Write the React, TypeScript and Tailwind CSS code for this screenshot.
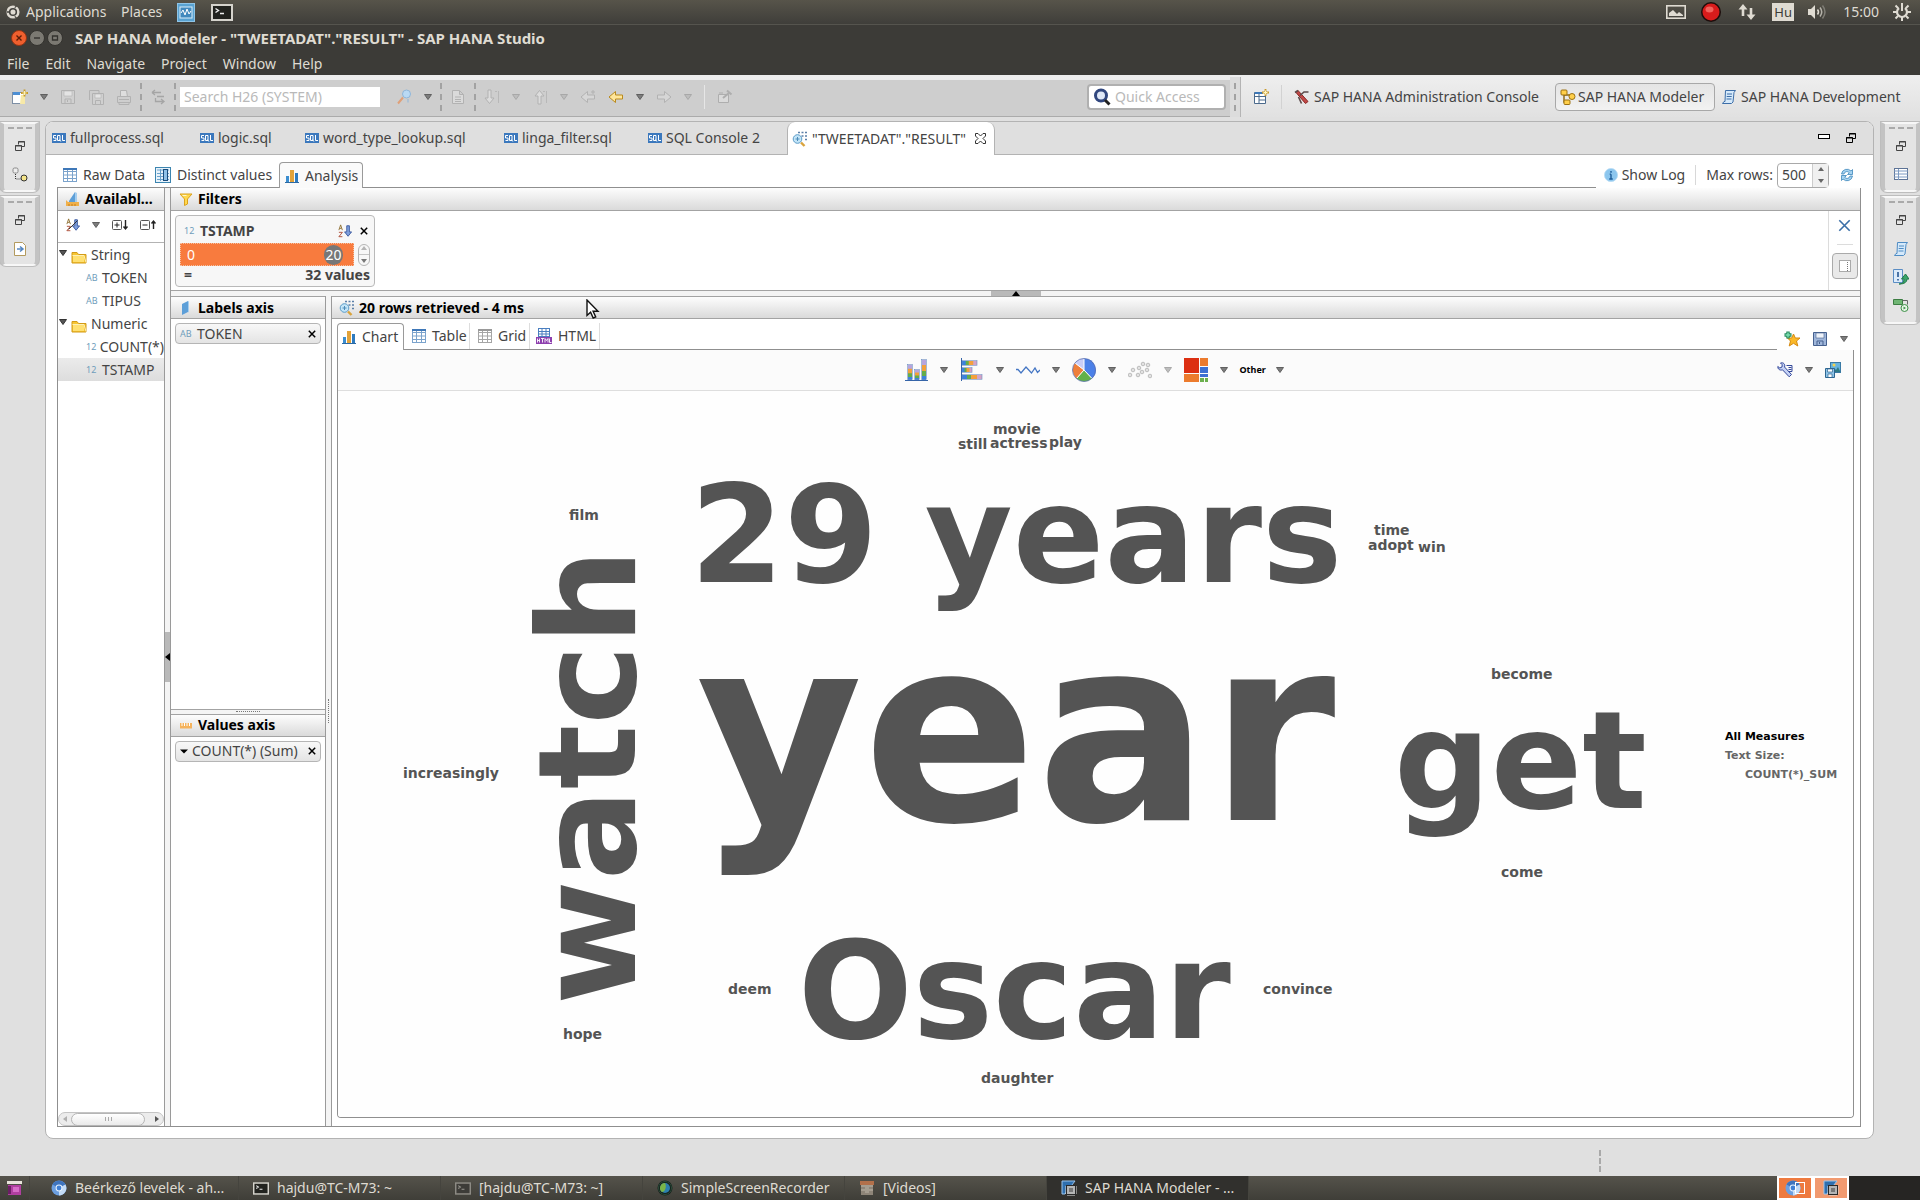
import React from "react";

type IconProps = { size?: number; w?: number; h?: number; box?: string; className?: string; children: React.ReactNode };

const Icon: React.FC<IconProps> = ({ size = 16, w, h, box = "0 0 16 16", className = "", children }) => (
  <svg width={w ?? size} height={h ?? size} viewBox={box} fill="none" aria-hidden="true" className={`shrink-0 ${className}`}>
    {children}
  </svg>
);

const IconButton: React.FC<{ label: string; className?: string; children: React.ReactNode }> = ({ label, className = "", children }) => (
  <button type="button" aria-label={label} className={`flex shrink-0 items-center justify-center ${className}`}>
    {children}
  </button>
);

const Arrow: React.FC<{ label?: string; faded?: boolean }> = ({ label = "Open menu", faded }) => (
  <IconButton label={label}>
    <Icon w={8} h={6} box="0 0 8 6">
      <path d="M.5 .5h7L4 5.5z" fill={faded ? "#bdbdbd" : "#7d7d7d"} stroke={faded ? "#a8a8a8" : "#606060"} />
    </Icon>
  </IconButton>
);

const DashedSep = () => <span className="h-7 w-0.5 shrink-0 border-l-2 border-dashed border-[#a2a2a2]" />;

/* ---------- icons ---------- */

const SqlIcon = () => (
  <Icon w={14} h={10} box="0 0 14 10">
    <rect width="14" height="10" fill="#3b78bd" />
    <path d="M4 2.500H1.500V5H4v2.500H1.500M5.500 2.500h2.500v5H5.500zM7.500 6.500l1.300 2M10.500 2v5.500H13" stroke="#fff" />
  </Icon>
);

const BarsIcon: React.FC<{ size?: number }> = ({ size = 14 }) => (
  <Icon size={size} box="0 0 14 14">
    <rect x="1" y="7" width="3" height="6" fill="#3c8ed0" />
    <rect x="5" y="1" width="4" height="12" fill="#e3a33a" />
    <rect x="10" y="4" width="3" height="9" fill="#2f7bbf" />
    <path d="M0 13.500h14" stroke="#2c6aa3" />
  </Icon>
);

const TableIcon: React.FC<{ color?: string; head?: string }> = ({ color = "#7ba3cc", head = "#3f78b8" }) => (
  <Icon size={14} box="0 0 14 14">
    <rect x=".5" y=".5" width="13" height="13" fill="#fff" stroke={color} />
    <path d="M0 3.500h14M0 7h14M0 10.500h14M4.500 0v14M9.500 0v14" stroke={color} />
    <path d="M0 1h14" stroke={head} strokeWidth="2" />
  </Icon>
);

const DistinctIcon = () => (
  <Icon>
    <rect x=".5" y=".5" width="15" height="15" fill="#e8f3fb" stroke="#3c85b0" />
    <path d="M2 3h12M2 6.500h12M2 9.500h12M2 12.500h12M5.500 2v12" stroke="#6ca3cc" />
    <rect x="8.500" y="2.500" width="4" height="11" fill="#8fc1e8" stroke="#1a4c7c" />
  </Icon>
);

const HtmlIcon = () => (
  <Icon>
    <rect x="2.500" y=".5" width="11" height="8" fill="#fff" stroke="#4a7fc0" />
    <path d="M2 3.500h12M2 6h12M6 0v9M10 0v9" stroke="#4a7fc0" />
    <rect y="9" width="16" height="7" fill="#8d3fae" />
    <path d="M1.500 10.500v4M3.500 10.500v4M1.500 12.500h2M5 10.500h3M6.500 10.500v4M9 14.500v-4l1.500 2 1.500-2v4M13.500 10.500v4H15.500" stroke="#fff" strokeWidth=".9" />
  </Icon>
);

const LensTableIcon = () => (
  <Icon>
    <path d="M6 1.500h2M9.500 1.500h2M13 1.500h2M9.500 5h2M13 5h2M13 8.500h2" stroke="#5b7fa8" strokeWidth="1.600" />
    <circle cx="5.500" cy="8" r="4.300" fill="#c3e5f8" stroke="#5b9cc8" />
    <path d="M3.500 8h4M5.500 6v4" stroke="#4d8bb8" />
    <path d="M9 11.500l3.500 3.500" stroke="#d9a33c" strokeWidth="2.400" />
  </Icon>
);

const AxisIcon: React.FC<{ base?: boolean }> = ({ base }) => (
  <Icon>
    <path d={base ? "M4 10L10 1v10H4z" : "M4 4l6-3v11l-6 3z"} fill="#5d9fd8" />
    <path d={base ? "M10 1l2 1v9h-2z" : "M10 1l1 .5v10.500l-1 .5z"} fill="#a5cdee" />
    {base && <path d="M1 15V9l2 2h11v4z" fill="#f0b04a" />}
    {base && <path d="M4 15v-2M7 15v-2M10 15v-2" stroke="#c47d1c" />}
  </Icon>
);

const RulerIcon = () => (
  <Icon>
    <path d="M2 11.500V6h12v5.500z" fill="#f5b35c" />
    <path d="M4 6v3M6.500 6v3M9 6v3M11.500 6v3" stroke="#fff" />
  </Icon>
);

const FunnelIcon = () => (
  <Icon>
    <path d="M2 3h12l-4.500 5v5l-3 1.500V8z" fill="#ffd84e" stroke="#dba21d" />
    <path d="M4.500 4.500h4" stroke="#fff6c9" />
  </Icon>
);

const SortIcon: React.FC<{ off?: boolean }> = ({ off }) => (
  <Icon size={14}>
    <path d="M1 7l2-6 2 6M2 5h2" stroke="#8a6a2a" />
    <path d="M1 9.500h4L1 14.500h4" stroke="#a8432c" />
    <path d="M10 2h3v7h2.500l-4 5-4-5H10z" fill="#7f9fdc" stroke="#34549c" />
    {off && <path d="M3 13L13 3" stroke="#222" />}
  </Icon>
);

const TreeToggleIcon: React.FC<{ plus?: boolean }> = ({ plus }) => (
  <Icon>
    <rect x=".5" y="3.500" width="9" height="9" rx="1" stroke="#555" />
    <path d={plus ? "M2.500 8h5M5 5.500v5" : "M2.500 8h5"} stroke="#222" />
    <path d={plus ? "M13.500 3v8M11.500 9.500l2 2.500 2-2.500" : "M13.500 12V4.500M11.500 6.500l2-2.500 2 2.500"} stroke="#222" strokeWidth="1.400" />
  </Icon>
);

const FolderIcon = () => (
  <Icon w={16} h={14} box="0 0 16 14">
    <path d="M1 13V2.500h5l1.500 2H15V13z" fill="#f7c531" stroke="#d29a18" />
    <path d="M1.500 5.500H13L15 12.500" stroke="#fdf0b5" />
    <path d="M2 6h11v6H2z" fill="#ffe070" />
  </Icon>
);

const Restore: React.FC<{ color?: string }> = ({ color = "#444" }) => (
  <Icon size={10} box="0 0 10 10">
    <path d="M3.500 3.500v-3h6v5h-3M3 1h7M.5 4.500h6v5h-6zM0 5h7" stroke={color} />
  </Icon>
);

const Cross: React.FC<{ color?: string; size?: number }> = ({ color = "#000", size = 8 }) => (
  <Icon size={size} box="0 0 8 8">
    <path d="M.8 .8l6.400 6.400M7.200 .8L.8 7.200" stroke={color} strokeWidth={size > 8 ? "1" : "1.500"} />
  </Icon>
);

const TerminalIcon: React.FC<{ w?: number; h?: number; dim?: boolean }> = ({ w = 22, h = 17, dim }) => (
  <Icon w={w} h={h} box="0 0 22 17">
    <rect x="1" y="1" width="20" height="15" fill={dim ? "#3d3c38" : "#22231f"} stroke={dim ? "#8d8b84" : "#d5d3cc"} strokeWidth="2" />
    <path d="M4.500 4.500l3 2-3 2M9 9.500h4" stroke={dim ? "#9b9992" : "#eee"} strokeWidth="1.400" />
  </Icon>
);

const ChromeIcon = () => (
  <Icon>
    <circle cx="8" cy="8" r="7.500" fill="#6c9fe0" />
    <path d="M8 8L1.500 4.500A7.500 7.500 0 0 1 14.500 4.500z" fill="#3f74bd" />
    <path d="M8 8l6.500-3.500A7.500 7.500 0 0 1 8 15.500z" fill="#c3dbf6" />
    <circle cx="8" cy="8" r="3.400" fill="#e8f2fd" />
    <circle cx="8" cy="8" r="2.400" fill="#3f7fd4" />
  </Icon>
);

const HanaIcon = () => (
  <Icon>
    <path d="M1 1h13L4 14H1z" fill="#2f6fae" stroke="#9ac4ec" />
    <rect x="5.500" y="5.500" width="9" height="9" fill="#b5b5b5" stroke="#2a2a2a" />
    <path d="M4 7h1M4 9h1M4 11h1M4 13h1M7 15v1M9 15v1M11 15v1M13 15v1M15 7h1M15 9h1M15 11h1M15 13h1" stroke="#ddd" />
    <rect x="8" y="8" width="4" height="4" fill="#777" />
  </Icon>
);

const NewIcon = () => (
  <Icon>
    <rect x=".5" y="3.500" width="12" height="11" fill="#fff" stroke="#7d8fa5" />
    <rect x="1" y="3" width="7" height="3" fill="#4d8fd4" />
    <path d="M9 6h4v9H8z" fill="#f7e9a8" />
    <path d="M12.500 .5v7M9 4h7" stroke="#c49a2b" strokeWidth="1.800" />
    <path d="M12.500 2v4M10.500 4h4" stroke="#fff3b5" />
  </Icon>
);

const SaveIcon: React.FC<{ faded?: boolean; stacked?: boolean }> = ({ faded, stacked }) => {
  const line = faded ? "#b2b2b2" : "#46618f";
  return (
    <Icon>
      {stacked && <path d="M1.500 11V1.500H11V4" stroke={line} />}
      <path d={stacked ? "M4.500 4.500h11v11h-11z" : "M1.500 1.500h13v13h-13z"} fill={faded ? "#d0d0d0" : "#9fb6da"} stroke={line} />
      <path d={stacked ? "M7 5h6v4H7z" : "M4 2h8v5H4z"} fill={faded ? "#e4e4e4" : "#eef3fa"} stroke={line} strokeWidth=".6" />
      <path d={stacked ? "M7.500 15v-3.500h5V15" : "M5 14v-4h6v4M7.500 11v2"} stroke={line} />
    </Icon>
  );
};

const PrintIcon = () => (
  <Icon>
    <path d="M4.500 8V1.500h6l1 6.500" fill="#dedede" stroke="#b2b2b2" />
    <path d="M1.500 7.500h13v6h-13zM3 13.500h10v2H3zM3 10.500h10" stroke="#b2b2b2" />
  </Icon>
);

const DocIcon = () => (
  <Icon>
    <path d="M2.500 1.500h7l4 4v9h-11zM9.500 1.500v4h4M5 8h6M5 10.500h6M5 12.500h6" fill="#dadada" stroke="#b2b2b2" />
  </Icon>
);

const LinkIcon = () => (
  <Icon>
    <path d="M2 3.500h9M2 3.500L5 1M2 3.500L5 6M5.500 9v3.500h8M11 10l3 2.500-3 2.500M7 7.500h7" stroke="#a5a5a5" strokeWidth="1.300" />
  </Icon>
);

const StepIcon: React.FC<{ up?: boolean }> = ({ up }) => (
  <Icon>
    <path d={up ? "M6 15V7H3l4.500-5.500L12 7H9v8z" : "M4 1h3v8h3l-4.500 5.500L1 9h3z"} fill="#dcdcdc" stroke="#b2b2b2" />
    <path d="M14.500 2v12M11 2.500h2" stroke="#b8b8b8" />
  </Icon>
);

const NavArrow: React.FC<{ kind: "last" | "back" | "forward" }> = ({ kind }) => (
  <Icon>
    {kind === "forward" ? (
      <path d="M1.500 6h7V2.500L15 8l-6.500 5.500V10h-7z" fill="#d6d6d6" stroke="#b2b2b2" />
    ) : (
      <path d="M14.500 6h-7V2.500L1 8l6.500 5.500V10h7z" fill={kind === "back" ? "#ffe69a" : "#d6d6d6"} stroke={kind === "back" ? "#b98a1e" : "#b2b2b2"} />
    )}
    {kind === "last" && <path d="M13 1v4M11 3h4" stroke="#b2b2b2" />}
  </Icon>
);

const PinIcon = () => (
  <Icon>
    <path d="M1.500 5.500h10v8h-10z" fill="#dadada" stroke="#aeaeae" />
    <path d="M6 9l6-5M10 1.500l4.500 4" stroke="#aeaeae" strokeWidth="2" />
    <path d="M2 4h4" stroke="#aeaeae" />
  </Icon>
);

const WandIcon = () => (
  <Icon>
    <circle cx="10.500" cy="5" r="4" fill="#b9d9f4" stroke="#8fb6da" />
    <path d="M7 8.500L2 14.500" stroke="#e0a078" strokeWidth="2" />
    <path d="M12 10v3.500" stroke="#8fb6da" />
  </Icon>
);

const MagnifierIcon = () => (
  <Icon size={18} box="0 0 18 18">
    <circle cx="8" cy="7.500" r="5.500" fill="#dfe8f7" stroke="#31477f" strokeWidth="3" />
    <path d="M12 12l4.500 4.500" stroke="#222" strokeWidth="3" />
  </Icon>
);

const OpenPerspectiveIcon = () => (
  <Icon>
    <path d="M1.500 3.500h11v11h-11zM1.500 7.500h11M6 3.500v11M6 11h6.500" fill="#fff" stroke="#4b6a8c" />
    <path d="M2 4h8" stroke="#3c78b8" strokeWidth="2" />
    <path d="M12.500 0v7M9 3.500h7" stroke="#c9992a" strokeWidth="1.800" />
    <path d="M12.500 1.500v4M10.500 3.500h4" stroke="#fff6c0" />
  </Icon>
);

const AdminIcon = () => (
  <Icon>
    <path d="M4 1.500l10 11-2.500 2L2 3.500z" fill="#c14a48" stroke="#8c2422" />
    <path d="M1 3.500l3-2M6 6.500l4-3.500h4.500M4.500 8l3 6.500" stroke="#5c4a4a" strokeWidth="1.600" />
  </Icon>
);

const ModelerIcon = () => (
  <Icon>
    <path d="M4 4v9h6M4 6h6" stroke="#8a6410" strokeWidth="1.400" />
    <rect x="1" y="1" width="6" height="5" rx="1" fill="#ffcf4a" stroke="#9c7112" />
    <circle cx="12" cy="7.500" r="3" fill="#ffcf4a" stroke="#9c7112" />
    <rect x="4" y="11" width="6" height="4.500" rx="1" fill="#ffcf4a" stroke="#9c7112" />
  </Icon>
);

const ScrollIcon: React.FC<{ color?: string }> = ({ color = "#3d6ea8" }) => (
  <Icon>
    <path d="M4.500 1.500h10l-1.500 2-1 9.500-1.500 1.500h-9l1.500-2h1z" fill="#d5e9fa" stroke={color} />
    <path d="M6 5h5M5.700 7.500h5M5.500 10h5" stroke={color} />
  </Icon>
);

const RefreshIcon = () => (
  <Icon>
    <path d="M2.500 7a5.500 5.500 0 0 1 9.500-3l1.500-1.500v5h-5L10.300 5.700A3 3 0 0 0 5 7z" fill="#a7d3f0" stroke="#3c86bb" strokeWidth=".8" />
    <path d="M13.500 9a5.500 5.500 0 0 1-9.500 3l-1.500 1.500v-5h5L5.700 10.300A3 3 0 0 0 11 9z" fill="#a7d3f0" stroke="#3c86bb" strokeWidth=".8" />
  </Icon>
);

const StarIcon = () => (
  <Icon>
    <path d="M9.500 3l1.800 4H16l-3.500 3 1.300 5-4.300-2.700L5.200 15l1.300-5L3.500 7h4.200z" fill="#fbb928" stroke="#d58a12" />
    <path d="M4 .5v7M.5 4h7" stroke="#23895c" strokeWidth="3.400" />
    <path d="M4 1.500v5M1.500 4h5" stroke="#7fe0b2" strokeWidth="1.400" />
  </Icon>
);

const WrenchIcon = () => (
  <Icon>
    <path d="M.8 4.500l2 1.500L5 5l.2-2.300L3.500 1C6.500 0 8.500 2.500 7.500 5l7 7.500-2.300 2.300L5.500 7.800C3 8.800 .5 7 .8 4.500z" fill="#c5d2f5" stroke="#34489a" />
    <path d="M9.500 3.500h5.500v6h-3.500M11.500 5.500h3M11.500 7.500h3" stroke="#34489a" />
  </Icon>
);

const PictureSaveIcon = () => (
  <Icon>
    <rect x="5.500" y=".5" width="10" height="10" fill="#67b4dd" stroke="#3a7aa5" />
    <path d="M6 10l3-4 2 2 2-3 2.500 5z" fill="#2f7b86" />
    <circle cx="9" cy="3" r="1.500" fill="#f8d34a" />
    <path d="M.5 6.500h9v9h-9z" fill="#8ec4e8" stroke="#2f6690" />
    <path d="M2.500 7h5v3h-5zM3 15v-3h4v3" fill="#fff" stroke="#2f6690" strokeWidth=".7" />
  </Icon>
);

/* ---------- chart toolbar icons, 24px ---------- */

const columnStack = (x: number, y: number) => (
  <g key={x}>
    <rect x={x} y={y} width="4" height={22 - y} fill="#3c82dc" />
    <rect x={x} y={y} width="4" height={(22 - y) * 0.8} fill="#63ad4a" />
    <rect x={x} y={y} width="4" height={(22 - y) * 0.55} fill="#f2a03c" />
    <rect x={x} y={y} width="4" height={(22 - y) * 0.25} fill="#b7a4dd" />
    <rect x={x - 0.5} y={y - 0.5} width="5" height={22 - y} stroke="#6c8cc0" strokeWidth=".6" />
  </g>
);

const rowStack = (y: number, w: number) => (
  <g key={y}>
    <rect x="2" y={y} width={w} height="4" fill="#d3a3c5" />
    <rect x="2" y={y} width={w * 0.75} height="4" fill="#f2a03c" />
    <rect x="2" y={y} width={w * 0.45} height="4" fill="#63ad4a" />
    <rect x="2" y={y} width={w * 0.25} height="4" fill="#3c82dc" />
    <rect x="2" y={y - 0.5} width={w} height="5" stroke="#6c8cc0" strokeWidth=".6" />
  </g>
);

const CHARTS: { label: string; faded?: boolean; art: React.ReactNode }[] = [
  { label: "Column chart", art: <>{columnStack(4, 7)}{columnStack(11, 12)}{columnStack(18, 2)}<path d="M1 22.500h23" stroke="#3564a8" /></> },
  { label: "Bar chart", art: <>{rowStack(3, 15)}{rowStack(10, 10)}{rowStack(17, 20)}<path d="M1.500 0v23" stroke="#3564a8" /></> },
  { label: "Line chart", art: <path d="M0 11.500h2l3 3.500 5-6 5.500 6 3.500-5 2.500 4.500 2.500-2.500" stroke="#4677c4" strokeWidth="1.300" /> },
  {
    label: "Pie chart",
    art: (
      <>
        <path d="M12 12V.5A11.500 11.500 0 0 1 20 20.500z" fill="#4b80e8" />
        <path d="M12 12l8 8.500a11.500 11.500 0 0 1-15.500 0z" fill="#62b14a" />
        <path d="M12 12l-7.500 8.500A11.500 11.500 0 0 1 3 5z" fill="#ee7f3b" />
        <path d="M12 12L3 5A11.500 11.500 0 0 1 12 .5z" fill="#c8cdf7" />
        <path d="M12 .5V12l8 8.500M12 12l-7.500 8.500M12 12L3 5" stroke="#fff" />
        <circle cx="12" cy="12" r="11.500" stroke="#5a6fae" strokeWidth=".8" />
      </>
    ),
  },
  {
    label: "Scatter chart",
    faded: true,
    art: [[2, 17], [5, 12], [10, 17], [11, 10], [14, 14], [15, 6], [19, 12], [20, 7], [22, 18]].map(([x, y]) => (
      <circle key={`${x}-${y}`} cx={x} cy={y} r="1.800" fill="#e2e2e2" stroke="#bdbdbd" />
    )),
  },
  {
    label: "Tree map",
    art: (
      <>
        <path d="M0 0h15v15H0z" fill="#dc2f12" />
        <path d="M0 16h15v8H0zM16 0h8v8h-8z" fill="#ec7b2d" />
        <path d="M16 9h8v6h-8zM16 16h8v3h-8z" fill="#3d70d2" />
        <path d="M16 20h4v4h-4zM21 20h3v4h-3z" fill="#6cb04e" />
      </>
    ),
  },
];

/* ---------- data ---------- */

const SQL_TABS = [
  { name: "fullprocess.sql", cls: "w-[148px]" },
  { name: "logic.sql", cls: "w-[105px]" },
  { name: "word_type_lookup.sql", cls: "w-[199px]" },
  { name: "linga_filter.sql", cls: "w-36" },
  { name: "SQL Console 2", cls: "w-[139px]" },
];

const TREE = [
  { name: "String", type: "AB", columns: ["TOKEN", "TIPUS"] },
  { name: "Numeric", type: "12", columns: ["COUNT(*)", "TSTAMP"] },
];

// left edge and baseline inside the cloud area
const WORDS = [
  { text: "year", x: 358, y: 429, size: 256 },
  { text: "29 years", x: 352, y: 191, size: 135 },
  { text: "Oscar", x: 460, y: 647, size: 135 },
  { text: "get", x: 1056, y: 417, size: 135 },
  { text: "movie", x: 655, y: 43, size: 14 },
  { text: "still", x: 620, y: 58, size: 14 },
  { text: "actress", x: 652, y: 57, size: 14 },
  { text: "play", x: 711, y: 56, size: 14 },
  { text: "film", x: 231, y: 129, size: 14 },
  { text: "time", x: 1036, y: 144, size: 14 },
  { text: "adopt", x: 1030, y: 159, size: 14 },
  { text: "win", x: 1080, y: 161, size: 14 },
  { text: "become", x: 1153, y: 288, size: 14 },
  { text: "come", x: 1163, y: 486, size: 14 },
  { text: "increasingly", x: 65, y: 387, size: 14 },
  { text: "hope", x: 225, y: 648, size: 14 },
  { text: "deem", x: 390, y: 603, size: 14 },
  { text: "convince", x: 925, y: 603, size: 14 },
  { text: "daughter", x: 643, y: 692, size: 14 },
];

const TASKS = [
  { name: "Beérkező levelek - ah...", icon: <ChromeIcon />, active: false },
  { name: "hajdu@TC-M73: ~", icon: <TerminalIcon w={16} h={13} />, active: false },
  { name: "[hajdu@TC-M73: ~]", icon: <TerminalIcon w={16} h={13} dim />, active: false },
  {
    name: "SimpleScreenRecorder",
    icon: <Icon><circle cx="8" cy="8" r="7.500" fill="#14201c" /><circle cx="8" cy="8" r="5" fill="#2c7fae" /><path d="M8 3a5 5 0 0 0-3 9c3 0 5-5 3-9z" fill="#7ab648" /><circle cx="8" cy="8" r="6.500" stroke="#2a4c38" /></Icon>,
    active: false,
  },
  {
    name: "[Videos]",
    icon: <Icon><path d="M2 2h12v13H2z" fill="#8e8578" /><path d="M1 1h14v4H1z" fill="#b2704a" /><path d="M2 6h12M2 10h12M6 8h4M6 12h4" stroke="#bdb6a8" /></Icon>,
    active: false,
  },
  { name: "SAP HANA Modeler - ...", icon: <HanaIcon />, active: true },
];

/* ---------- small parts ---------- */

const Header: React.FC<{ icon: React.ReactNode; title: string; className?: string }> = ({ icon, title, className = "gap-1" }) => (
  <h2 className={`flex h-[23px] shrink-0 items-center overflow-hidden border-b border-[#a3a3a3] bg-gradient-to-b from-[#fdfdfd] to-[#dadada] pl-[7px] font-bold whitespace-nowrap text-black ${className}`}>
    {icon}
    {title}
  </h2>
);

const AxisItem: React.FC<{ name: string; icon: React.ReactNode }> = ({ name, icon }) => (
  <div className="mx-1 mt-1 flex h-[21px] items-center rounded-sm border border-[#b5b5b5] bg-gradient-to-b from-[#f8f8f8] to-[#e4e4e4] pr-1 pl-1">
    {icon}
    <span className="flex-1 whitespace-nowrap">{name}</span>
    <IconButton label={`Remove ${name}`}><Cross /></IconButton>
  </div>
);

const TypeTag: React.FC<{ type: string; className?: string }> = ({ type, className = "" }) => (
  <span className={`text-[9px] text-[#6f9dbb] ${className}`}>{type}</span>
);

const Trim: React.FC<{ label: string; className?: string; children: React.ReactNode }> = ({ label, className = "", children }) => (
  <div aria-label={label} role="toolbar" className={`flex flex-col items-center rounded-b-md border-x-4 border-t-2 border-b-2 border-x-[#c3c3c3] border-y-[#f7f7f7] bg-[#e4e4e4] pt-[3px] shadow-[0_0_0_1px_#bdbdbd] ${className}`}>
    <span className="mb-3 w-6 border-t-2 border-dashed border-[#aaa]" />
    {children}
  </div>
);

const TopPanel = () => (
  <header className="flex h-[25px] shrink-0 items-center border-b border-[#55544e] bg-gradient-to-b from-[#57544a] to-[#3f3e3a] px-1.5 text-[#dfdbd2]">
    <Icon size={14} className="mr-1.5">
      <circle cx="8" cy="8" r="7.500" fill="#dfdbd2" />
      <circle cx="8" cy="8" r="3.800" stroke="#45443f" strokeWidth="1.800" />
      <path d="M1 8h3M10 3l2-2M10 13l2 2" stroke="#45443f" strokeWidth="1.500" />
    </Icon>
    <button type="button" className="w-[95px] text-left">Applications</button>
    <button type="button" className="w-14 text-left">Places</button>
    <IconButton label="System monitor" className="mr-4">
      <Icon w={18} h={19} box="0 0 18 19">
        <rect x=".5" y=".5" width="17" height="18" fill="#5aa3d2" stroke="#8fc4e6" />
        <rect x="3" y="4" width="12" height="11" fill="#4289bd" stroke="#d9eefa" />
        <path d="M4 10l2-3 2 5 2-6 2 5 2-3" stroke="#fff" />
      </Icon>
    </IconButton>
    <IconButton label="Terminal"><TerminalIcon /></IconButton>
    <div className="ml-auto flex items-center pr-[3px]">
      <Icon w={20} h={14} box="0 0 20 14" className="mr-3.5">
        <rect x=".8" y=".8" width="18.400" height="12.400" stroke="#dfdbd2" strokeWidth="1.600" />
        <path d="M3 11V8l4-3 4 4 2-2 4 3v1z" fill="#dfdbd2" />
      </Icon>
      <Icon w={22} h={20} box="0 0 22 20" className="mr-4">
        <circle cx="11" cy="10" r="10" fill="#1c0d0b" />
        <circle cx="11" cy="10" r="8.500" fill="#d81c1c" />
        <ellipse cx="9.500" cy="7.500" rx="4" ry="3" fill="#f0625c" />
      </Icon>
      <Icon w={18} h={16} box="0 0 18 16" className="mr-4">
        <path d="M5 12V3M13 4v9" stroke="#dfdbd2" strokeWidth="2.600" />
        <path d="M5 0l4.500 5.500h-9zM13 16l4.500-5.500h-9z" fill="#dfdbd2" />
      </Icon>
      <span className="mr-3.5 flex h-[18px] w-[22px] items-center justify-center bg-[#dfdbd2] text-[13px] text-[#3c3b37]">Hu</span>
      <Icon w={19} h={16} box="0 0 19 16" className="mr-4">
        <path d="M0 5h3l4-4v14l-4-4H0z" fill="#dfdbd2" />
        <path d="M9.500 5.500q2 2.500 0 5" stroke="#dfdbd2" strokeWidth="1.500" />
        <path d="M12 3.500q3.500 4.500 0 9" stroke="#b5b2a9" strokeWidth="1.500" />
        <path d="M14.500 1.500q5 6.500 0 13" stroke="#7f7d75" strokeWidth="1.500" />
      </Icon>
      <time className="mr-3.5">15:00</time>
      <Icon size={18} box="0 0 18 18">
        <path d="M6 5a5 5 0 1 0 6 0" stroke="#dfdbd2" strokeWidth="2.200" />
        <path d="M9 0v8M9 14v4M0 9h3.500M14.500 9H18M2.500 2.500L5 5M13 13l2.500 2.500M15.500 2.500L13 5M5 13l-2.500 2.500" stroke="#dfdbd2" strokeWidth="2" />
      </Icon>
    </div>
  </header>
);

const TitleBar = () => (
  <div className="shrink-0 bg-[#3c3b37] text-[#dfdbd2]">
    <div className="flex h-[26px] items-center gap-0.5 pl-[11px]">
      <IconButton label="Close window">
        <Icon><circle cx="8" cy="8" r="7.500" fill="#ef5f2e" stroke="#8f3516" /><path d="M5.500 5.500l5 5M10.500 5.500l-5 5" stroke="#5a1d08" strokeWidth="1.400" /></Icon>
      </IconButton>
      <IconButton label="Minimize window">
        <Icon><circle cx="8" cy="8" r="7.500" fill="#7b7972" stroke="#33322e" /><path d="M5 8h6" stroke="#33322e" strokeWidth="1.400" /></Icon>
      </IconButton>
      <IconButton label="Maximize window">
        <Icon><circle cx="8" cy="8" r="7.500" fill="#7b7972" stroke="#33322e" /><path d="M5.500 6h5v4h-5z" stroke="#33322e" strokeWidth="1.300" /></Icon>
      </IconButton>
      <h1 className="ml-2.5 text-[15px] font-bold">SAP HANA Modeler - "TWEETADAT"."RESULT" - SAP HANA Studio</h1>
    </div>
    <nav aria-label="Main menu" className="flex h-6 items-center gap-4 pt-0.5 pl-[7px]">
      {["File", "Edit", "Navigate", "Project", "Window", "Help"].map(m => (
        <button key={m} type="button">{m}</button>
      ))}
    </nav>
  </div>
);

const Toolbar = () => (
  <div className="flex h-[42px] shrink-0 border-t-2 border-[#ededed] bg-gradient-to-b from-[#eeeeee] to-[#e1e1e1]">
    <div className="mt-[3px] flex flex-1 items-center gap-2 border-b border-[#ababab] bg-[#cecece] pb-[3px] pl-3">
      <div className="flex items-center gap-3">
        <IconButton label="New"><NewIcon /></IconButton>
        <Arrow />
        <IconButton label="Save"><SaveIcon faded /></IconButton>
        <IconButton label="Save all"><SaveIcon faded stacked /></IconButton>
        <IconButton label="Print"><PrintIcon /></IconButton>
      </div>
      <DashedSep />
      <IconButton label="Link"><LinkIcon /></IconButton>
      <DashedSep />
      <input aria-label="Search system" placeholder="Search H26 (SYSTEM)" className="-ml-1 h-5 w-50 bg-white px-1 placeholder:text-[#b9b9b9]" />
      <div className="ml-2 flex items-center gap-3">
        <IconButton label="Find"><WandIcon /></IconButton>
        <Arrow />
      </div>
      <DashedSep />
      <IconButton label="Document"><DocIcon /></IconButton>
      <DashedSep />
      <div className="flex items-center gap-3">
        <IconButton label="Next annotation"><StepIcon /></IconButton>
        <Arrow faded />
        <IconButton label="Previous annotation"><StepIcon up /></IconButton>
        <Arrow faded />
        <IconButton label="Last edit location"><NavArrow kind="last" /></IconButton>
        <IconButton label="Back"><NavArrow kind="back" /></IconButton>
        <Arrow />
        <IconButton label="Forward"><NavArrow kind="forward" /></IconButton>
        <Arrow faded />
        <span className="h-6 w-px bg-[#e6e6e6]" />
        <IconButton label="Pin editor"><PinIcon /></IconButton>
      </div>
      <label className="mr-1 ml-auto flex h-[26px] w-[139px] items-center gap-1 rounded-sm border-2 border-[#b0b0b0] bg-white pl-1">
        <MagnifierIcon />
        <input aria-label="Quick Access" placeholder="Quick Access" className="w-full min-w-0 placeholder:text-[#b9b9b9]" />
      </label>
    </div>
    <div className="flex items-center border-r border-[#b4b4b4] bg-[#dcdcdc] px-1"><DashedSep /></div>
    <nav aria-label="Perspectives" className="flex items-center pr-[15px] pl-3">
      <IconButton label="Open perspective"><OpenPerspectiveIcon /></IconButton>
      <span className="mx-3 h-6 w-px bg-[#d2d2d2]" />
      <button type="button" className="flex h-7 w-[261px] items-center gap-1 whitespace-nowrap"><AdminIcon />SAP HANA Administration Console</button>
      <button type="button" className="flex h-7 w-40 items-center gap-0.5 rounded border border-[#a8a8a8] bg-gradient-to-b from-[#e4e4e4] to-[#f2f2f2] pl-1 whitespace-nowrap"><ModelerIcon />SAP HANA Modeler</button>
      <button type="button" className="ml-1.5 flex h-7 w-[184px] items-center gap-1 whitespace-nowrap"><ScrollIcon />SAP HANA Development</button>
    </nav>
  </div>
);

const ColumnTree = () => (
  <section className="flex w-[107px] shrink-0 flex-col overflow-hidden border-r border-[#9a9a9a]">
    <Header icon={<AxisIcon base />} title="Availabl..." className="gap-1" />
    <div className="flex h-8 shrink-0 items-center gap-3 border-b border-[#b3b3b3] pb-1 pl-2">
      <IconButton label="Sort"><SortIcon off /></IconButton>
      <Arrow />
      <IconButton label="Expand all"><TreeToggleIcon plus /></IconButton>
      <IconButton label="Collapse all"><TreeToggleIcon /></IconButton>
    </div>
    <ul className="flex-1">
      {TREE.map(group => (
        <li key={group.name}>
          <div className="flex h-[23px] items-center">
            <Icon w={8} h={6} box="0 0 8 6" className="mb-1 ml-px"><path d="M.5 .5h7L4 5.500z" fill="#555" stroke="#333" /></Icon>
            <span className="mt-1 mr-1 ml-1"><FolderIcon /></span>
            {group.name}
          </div>
          <ul>
            {group.columns.map(col => (
              <li key={col} className={`flex h-[23px] items-center pl-7 whitespace-nowrap ${col === "TSTAMP" ? "bg-gradient-to-b from-[#ebebeb] to-[#dddddd]" : ""}`}>
                <TypeTag type={group.type} className="w-4" />
                {col}
              </li>
            ))}
          </ul>
        </li>
      ))}
    </ul>
    <div className="flex h-[14px] shrink-0 items-center justify-between rounded-full border border-[#c4c4c4] bg-[#ececec] px-1">
      <Icon w={4} h={6} box="0 0 4 6"><path d="M4 0v6L0 3z" fill="#b0b0b0" /></Icon>
      <span className="mr-2.5 ml-1 flex h-[13px] flex-1 items-center justify-center gap-0.5 rounded-full border border-[#b5b5b5] bg-gradient-to-b from-white to-[#eaeaea]">
        <i className="h-1 w-px bg-[#aaa]" /><i className="h-1 w-px bg-[#aaa]" /><i className="h-1 w-px bg-[#aaa]" />
      </span>
      <Icon w={4} h={6} box="0 0 4 6"><path d="M0 0v6l4-3z" fill="#555" /></Icon>
    </div>
  </section>
);

const Filters = () => (
  <section className="shrink-0">
    <Header icon={<FunnelIcon />} title="Filters" />
    <div className="flex h-20 border-b border-[#a3a3a3]">
      <div className="m-1 h-[72px] w-50 rounded-sm border border-[#b9b9b9] bg-[#f7f7f7] px-1 pt-0.5">
        <div className="flex h-[25px] items-center pl-1 font-bold">
          <TypeTag type="12" className="w-4 font-normal" />
          <span className="flex-1">TSTAMP</span>
          <IconButton label="Sort filter" className="mr-2"><SortIcon /></IconButton>
          <IconButton label="Remove filter" className="mr-0.5"><Cross /></IconButton>
        </div>
        <div className="flex h-[23px] items-center gap-1">
          <div className="flex h-full w-[174px] items-center border border-dotted border-[#f3c1a4] bg-[#f87b3e] pl-1.5 text-white">
            <input aria-label="TSTAMP from" defaultValue="0" className="w-10 text-white" />
            <input aria-label="TSTAMP to" defaultValue="20" className="mr-2.5 ml-auto w-[19px] rounded-full bg-[#777] text-center text-white" />
          </div>
          <div className="flex h-[22px] w-3 flex-col items-center justify-around rounded-full border border-[#b5b5b5]">
            <Icon w={6} h={4} box="0 0 6 4"><path d="M0 4l3-4 3 4z" fill="#b5b5b5" /></Icon>
            <i className="h-px w-full bg-[#c5c5c5]" />
            <Icon w={6} h={4} box="0 0 6 4"><path d="M0 0l3 4 3-4z" fill="#777" /></Icon>
          </div>
        </div>
        <div className="flex h-[18px] items-center justify-between pl-1 font-bold"><span>=</span><span>32 values</span></div>
      </div>
      <div className="ml-auto flex w-8 flex-col items-center border-l border-[#dcdcdc] pt-2">
        <IconButton label="Clear filters"><Cross size={13} color="#3a6fa8" /></IconButton>
        <span className="my-3 w-4 border-t border-[#dcdcdc]" />
        <IconButton label="Toggle filter pane" className="-mt-1 size-[26px] rounded border border-[#aaaaaa] bg-[#e9e9e9]">
          <Icon size={12} box="0 0 12 12"><rect x=".5" y=".5" width="11" height="11" fill="#fff" stroke="#aaa" /><path d="M8.500 2v9" stroke="#777" strokeDasharray="1 1" /></Icon>
        </IconButton>
      </div>
    </div>
  </section>
);

const WordCloud = () => (
  <div className="flex flex-1 overflow-hidden bg-[#fefefe] font-['DejaVu_Sans',sans-serif] font-bold text-[#545454]">
    <div className="relative flex-1">
      {WORDS.map(w => (
        <span
          key={w.text}
          className="absolute leading-none whitespace-nowrap"
          style={{ left: w.x, top: Math.round(w.y - w.size * 0.846), fontSize: w.size }}
        >
          {w.text}
        </span>
      ))}
      <span className="absolute top-[614px] left-[183px] origin-top-left -rotate-90 text-[135px] leading-none">watch</span>
    </div>
    <dl className="mt-[336px] w-32 shrink-0 self-start text-[11px] leading-[19px] text-[#666]">
      <dt className="text-black">All Measures</dt>
      <dd>Text Size:</dd>
      <dd className="pl-5">COUNT(*)_SUM</dd>
    </dl>
  </div>
);

const Results = () => (
  <section className="flex flex-1 flex-col overflow-hidden border-l border-[#9a9a9a]">
    <Header icon={<LensTableIcon />} title="20 rows retrieved - 4 ms" className="gap-1 border-t border-t-[#a3a3a3]" />
    <div role="tablist" className="mt-1 ml-[5px] flex h-[27px] shrink-0">
      <button type="button" role="tab" aria-selected="true" className="flex w-[67px] items-center gap-1.5 rounded-t border border-b-0 border-[#9a9a9a] pl-1">
        <BarsIcon />Chart
      </button>
      <div className="mr-[83px] flex flex-1 border-b border-[#8f8f8f]">
        <button type="button" role="tab" aria-selected="false" className="flex w-[66px] items-center gap-1.5 border-r border-[#ddd] pl-2"><TableIcon />Table</button>
        <button type="button" role="tab" aria-selected="false" className="flex w-[60px] items-center gap-1.5 border-r border-[#ddd] pl-2"><TableIcon color="#a5a5a5" head="#999" />Grid</button>
        <button type="button" role="tab" aria-selected="false" className="flex w-[70px] items-center gap-1.5 border-r border-[#ddd] pl-1.5"><HtmlIcon />HTML</button>
      </div>
      <div className="-ml-[76px] flex items-center gap-3 pr-3 pt-1">
        <IconButton label="Add to favorites"><StarIcon /></IconButton>
        <IconButton label="Save result"><SaveIcon /></IconButton>
        <Arrow />
      </div>
    </div>
    <div className="mr-1.5 mb-2 ml-[5px] flex flex-1 flex-col overflow-hidden rounded-b-sm border border-t-0 border-[#8f8f8f]">
      <div className="flex h-[41px] shrink-0 items-center border-b border-[#dedede] bg-[#fbfbfb]">
        <div className="w-[72px]" />
        <div className="flex flex-1 items-center justify-center gap-3">
          {CHARTS.map(c => (
            <React.Fragment key={c.label}>
              <IconButton label={c.label}><Icon size={24} box="0 0 24 24">{c.art}</Icon></IconButton>
              <Arrow faded={c.faded} />
            </React.Fragment>
          ))}
          <button type="button" className="w-6 text-[9px] font-bold text-black">Other</button>
          <Arrow />
        </div>
        <div className="flex w-[76px] items-center gap-3">
          <IconButton label="Chart settings"><WrenchIcon /></IconButton>
          <Arrow />
          <IconButton label="Export picture"><PictureSaveIcon /></IconButton>
        </div>
      </div>
      <WordCloud />
    </div>
  </section>
);

const Editor = () => (
  <main className="mt-1 mb-[37px] ml-1.5 flex flex-1 flex-col overflow-hidden rounded-lg border border-[#b3b3b3] bg-white">
    <div role="tablist" className="flex h-[33px] shrink-0 bg-[#dfdfdf]">
      <div className="flex border-b border-[#b3b3b3] pl-1.5">
        {SQL_TABS.map(t => (
          <button key={t.name} type="button" role="tab" aria-selected="false" className={`flex items-center gap-1 whitespace-nowrap ${t.cls}`}>
            <SqlIcon />{t.name}
          </button>
        ))}
      </div>
      <div className="flex w-[208px] items-center rounded-t-lg border-x border-[#b3b3b3] bg-white pl-1">
        <button type="button" role="tab" aria-selected="true" className="flex flex-1 items-center gap-1 whitespace-nowrap"><LensTableIcon />"TWEETADAT"."RESULT"</button>
        <IconButton label="Close tab" className="mr-2">
          <Icon size={11} box="0 0 11 11"><path d="M.5 .5h2.500l2.500 2.500L8 .5h2.500V3L8 5.500l2.500 2.500v2.500H8L5.500 8 3 10.500H.5V8L3 5.500.5 3z" stroke="#333" fill="#fff" /></Icon>
        </IconButton>
      </div>
      <div className="flex flex-1 items-center justify-end gap-4 border-b border-[#b3b3b3] pr-[17px]">
        <IconButton label="Minimize" className="mb-1"><Icon w={12} h={5} box="0 0 12 5"><rect x=".5" y=".5" width="11" height="4" fill="#fff" stroke="#000" /></Icon></IconButton>
        <IconButton label="Restore"><Restore color="#000" /></IconButton>
      </div>
    </div>
    <div className="mt-[7px] ml-[11px] mr-3 flex h-[26px] shrink-0">
      <div role="tablist" className="flex">
        <button type="button" role="tab" aria-selected="false" className="flex w-[91px] items-center gap-1.5 border-b border-[#8f8f8f] pl-1.5 whitespace-nowrap"><TableIcon />Raw Data</button>
        <button type="button" role="tab" aria-selected="false" className="flex w-[131px] items-center gap-1.5 border-b border-[#8f8f8f] pl-[7px] whitespace-nowrap"><DistinctIcon />Distinct values</button>
        <button type="button" role="tab" aria-selected="true" className="flex w-[84px] items-center gap-1.5 rounded-t border border-b-0 border-[#9a9a9a] bg-[#fafafa] pl-[5px]"><BarsIcon />Analysis</button>
      </div>
      <div className="mr-2 flex-1 border-b border-[#8f8f8f]" />
      <div className="flex items-center">
        <button type="button" className="flex items-center gap-1 whitespace-nowrap">
          <Icon size={14}><circle cx="8" cy="8" r="7.500" fill="#8cc6ee" stroke="#b9ddf5" /><path d="M8 3.500v2M8 7v5.500M6.500 7H8M6 12.500h4" stroke="#1c5c98" strokeWidth="1.600" /></Icon>
          Show Log
        </button>
        <span className="mx-2.5 h-5 w-px bg-[#d8d8d8]" />
        <label htmlFor="max-rows" className="mr-1 whitespace-nowrap">Max rows:</label>
        <div className="mr-2.5 flex h-[25px] w-[52px] rounded border border-[#a9a9a9]">
          <input id="max-rows" defaultValue="500" className="w-[34px] pl-1" />
          <div className="flex flex-1 flex-col items-center justify-around border-l border-[#ccc] bg-[#f0f0f0]">
            <Icon w={6} h={4} box="0 0 6 4"><path d="M0 4l3-4 3 4z" fill="#666" /></Icon>
            <Icon w={6} h={4} box="0 0 6 4"><path d="M0 0l3 4 3-4z" fill="#666" /></Icon>
          </div>
        </div>
        <IconButton label="Refresh" className="mr-1.5"><RefreshIcon /></IconButton>
      </div>
    </div>
    <div className="mr-3 mb-[11px] ml-[11px] flex flex-1 overflow-hidden border border-t-0 border-[#8f8f8f]">
      <ColumnTree />
      <div className="flex w-[5px] shrink-0 items-center bg-[#f4f4f4]">
        <IconButton label="Collapse columns" className="h-[50px] w-[5px] bg-[#b9b9b9]"><Icon w={5} h={8} box="0 0 5 8"><path d="M5 0v8L0 4z" fill="#000" /></Icon></IconButton>
      </div>
      <div className="flex flex-1 flex-col overflow-hidden border-l border-[#9a9a9a]">
        <Filters />
        <div className="flex h-[5px] shrink-0 justify-center bg-[#f4f4f4]">
          <IconButton label="Collapse filters" className="h-[5px] w-[50px] bg-[#b9b9b9]"><Icon w={8} h={5} box="0 0 8 5"><path d="M0 5h8L4 0z" fill="#000" /></Icon></IconButton>
        </div>
        <div className="flex flex-1 overflow-hidden">
          <div className="flex w-[155px] shrink-0 flex-col border-r border-[#9a9a9a]">
            <Header icon={<AxisIcon />} title="Labels axis" className="gap-1 border-t border-t-[#a3a3a3]" />
            <div className="flex-[389]"><AxisItem name="TOKEN" icon={<TypeTag type="AB" className="w-[17px]" />} /></div>
            <div className="flex h-[5px] shrink-0 items-center justify-center border-t border-[#a3a3a3] bg-[#f4f4f4]"><span className="w-6 border-t border-dotted border-[#777]" /></div>
            <Header icon={<RulerIcon />} title="Values axis" className="gap-1 border-t border-t-[#a3a3a3]" />
            <div className="flex-[389]">
              <AxisItem name="COUNT(*) (Sum)" icon={<Icon w={8} h={5} box="0 0 8 5" className="mr-1"><path d="M0 .5h8l-4 4z" fill="#000" /></Icon>} />
            </div>
          </div>
          <div className="flex w-[5px] shrink-0 items-center justify-center bg-[#f4f4f4]"><span className="h-6 border-l border-dotted border-[#777]" /></div>
          <Results />
        </div>
      </div>
    </div>
  </main>
);

const Taskbar = () => (
  <footer className="flex h-6 shrink-0 items-stretch bg-gradient-to-b from-[#55534b] to-[#3f3e38] text-[#dfdbd2]">
    <IconButton label="Show desktop" className="w-[30px] border-r border-[#45443e]">
      <Icon><path d="M0 1h15v3H0z" fill="#e8e4dc" /><path d="M1 5h13v10H1z" fill="#b03fa0" /><path d="M1 6h3v8H1z" fill="#6c1f66" /><path d="M6 7h6v5H6z" fill="#d76cc8" /></Icon>
    </IconButton>
    <nav aria-label="Open windows" className="flex pl-[7px]">
      {TASKS.map(t => (
        <button key={t.name} type="button" className={`flex w-[202px] items-center gap-2 border-r border-[#45443e] pl-3.5 whitespace-nowrap ${t.active ? "bg-[#31302d]" : ""}`}>
          {t.icon}{t.name}
        </button>
      ))}
    </nav>
    <div className="ml-auto flex">
      <IconButton label="Workspace 1" className="w-9 border-2 border-white bg-[#ee7a3f]"><ChromeIcon /><span className="-ml-1.5 h-3 w-2.5 border border-white" /></IconButton>
      <IconButton label="Workspace 2" className="w-9 border-2 border-white bg-[#f19a70]"><HanaIcon /></IconButton>
      <span className="w-[71px] bg-[#262523]" />
    </div>
  </footer>
);

export default function App() {
  return (
    <div className="relative flex h-screen min-h-[700px] flex-col overflow-hidden bg-[#e0e0e0] font-['Noto_Sans','Open_Sans',sans-serif] text-sm leading-5 text-[#444]">
      <TopPanel />
      <TitleBar />
      <Toolbar />
      <div className="flex flex-1 overflow-hidden">
        <aside className="flex w-[39px] shrink-0 flex-col gap-1 pt-[5px]">
          <Trim label="Systems view" className="h-[70px]">
            <Restore /><span className="mt-4"><Icon><rect x="1" y="1" width="5" height="5" rx="1.500" fill="#eee" stroke="#888" /><path d="M3.500 7v5h6" stroke="#333" strokeDasharray="1 1" /><circle cx="12" cy="11" r="3" fill="#f5e58a" stroke="#333" /></Icon></span>
          </Trim>
          <Trim label="Editor view" className="h-[70px]">
            <Restore /><span className="mt-4"><Icon><path d="M2.500 1.500h8l3 3v10h-11z" fill="#fff" stroke="#b39a5e" /><path d="M5 8h5M8 5.500l3 2.500-3 2.500" stroke="#5587c2" strokeWidth="1.500" /></Icon></span>
          </Trim>
        </aside>
        <Editor />
        <aside className="ml-[7px] flex w-[39px] shrink-0 flex-col gap-1 pt-[5px]">
          <Trim label="Properties view" className="h-[70px]">
            <Restore /><span className="mt-4"><Icon size={14} box="0 0 14 14"><rect x=".5" y="1.500" width="13" height="11" fill="#fff" stroke="#5d7396" /><path d="M0 4h14M0 7h14M0 10h14M4.500 2v11" stroke="#7c9ac2" /></Icon></span>
          </Trim>
          <Trim label="Job log view" className="h-[128px]">
            <Restore />
            <span className="mt-4"><ScrollIcon color="#4f8cc4" /></span>
            <span className="mt-3"><Icon><path d="M.5 .5h9v13h-9z" fill="#dcebfa" stroke="#5a8dc4" /><path d="M5 3v5M5 10v1.500" stroke="#1d4f8c" strokeWidth="1.500" /><path d="M6 15q5 0 5-5H8.500L12.500 5 16 10h-2q0 5-8 5z" fill="#3aa36a" stroke="#1f7a48" /></Icon></span>
            <span className="mt-3"><Icon><path d="M.5 2.500h9v5h-9z" fill="#6fb573" stroke="#3c7d42" /><path d="M9.500 3.500h5v4" stroke="#666" /><circle cx="11.500" cy="11" r="3.500" fill="#e8f6e8" stroke="#3c8f46" /><path d="M10.500 9.500v3l2.500-1.500z" fill="#3c8f46" /></Icon></span>
          </Trim>
        </aside>
      </div>
      {/* status line grip */}
      <span className="absolute right-[319px] bottom-7 h-[22px] border-l-2 border-dashed border-[#a9a9a9]" />
      <Taskbar />
      {/* mouse pointer */}
      <Icon w={14} h={20} box="0 0 14 20" className="absolute top-[299px] left-[586px]">
        <path d="M1 1v15.500l3.600-3.300 2.600 5.800 2.500-1.100-2.600-5.700h4.900z" fill="#fff" stroke="#111" strokeWidth="1.400" />
      </Icon>
    </div>
  );
}
